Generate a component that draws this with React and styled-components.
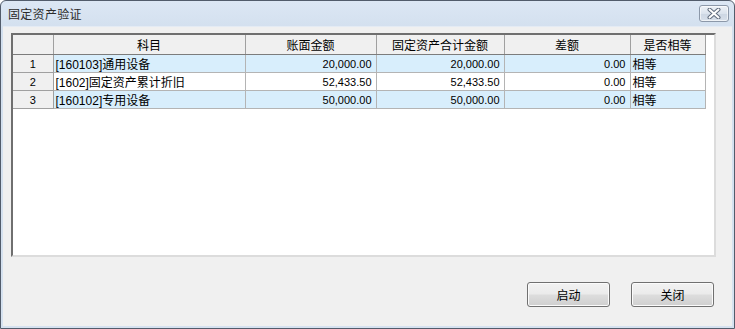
import React from "react";
import styled, { createGlobalStyle } from "styled-components";

const GlobalStyle = createGlobalStyle`
  html, body {
    margin: 0;
    padding: 0;
    background: #ffffff;
  }
  body {
    font-family: "Liberation Sans", "Noto Sans CJK SC", sans-serif;
    font-size: 12px;
    color: #000;
  }
`;

const Window = styled.div`
  width: 735px;
  height: 329px;
  box-sizing: border-box;
  border: 1px solid #525c6b;
  border-radius: 6px 6px 0 0;
  background: linear-gradient(#dce7f4, #d2dfee 30px, #d6e2f0);
  padding: 0 2px 2px 2px;
  display: flex;
  flex-direction: column;
`;

const TitleBar = styled.div`
  height: 25px;
  flex: none;
  display: flex;
  align-items: center;
  justify-content: space-between;
  padding: 0 3px 0 5px;
`;

const Title = styled.span`
  font-size: 12px;
  color: #2b2b2b;
  letter-spacing: 0.3px;
`;

const CloseButton = styled.div`
  width: 28px;
  height: 15px;
  margin-top: -1px;
  border: 1px solid #8c98a9;
  border-radius: 3px;
  background: linear-gradient(#eef2f7, #dbe3ed 50%, #ccd6e3 51%, #d8e0ea);
  display: flex;
  align-items: center;
  justify-content: center;
  box-shadow: inset 0 0 0 1px rgba(255, 255, 255, 0.6);
`;

const Body = styled.div`
  flex: 1;
  background: #f0f0f0;
  border-top: 1px solid #e4ebf4;
  display: flex;
  flex-direction: column;
  padding: 6px 16px 19px 8px;
`;

const Grid = styled.div`
  height: 224px;
  box-sizing: border-box;
  background: #ffffff;
  border-top: 2px solid #6f6f6f;
  border-left: 2px solid #6f6f6f;
  border-right: 2px solid #dcdcdc;
  border-bottom: 2px solid #dcdcdc;
  overflow: hidden;
`;

const Table = styled.table`
  border-collapse: collapse;
  table-layout: fixed;
  width: 692px;
`;

const HeadCell = styled.th`
  height: 19px;
  padding: 0;
  background: #f0f0f0;
  font-weight: normal;
  font-size: 12px;
  text-align: center;
  border-right: 1px solid #a0a0a0;
  border-bottom: 1px solid #7c7c7c;
  white-space: nowrap;
`;

const Row = styled.tr`
  height: 18px;
  background: ${(p) => (p.$alt ? "#d8eefc" : "#ffffff")};
`;

const NumCell = styled.td`
  background: #f0f0f0;
  text-align: center;
  padding: 0;
  font-size: 11px;
  border-right: 1px solid #a0a0a0;
  border-bottom: 1px solid #a0a0a0;
`;

const Cell = styled.td`
  padding: 0 ${(p) => (p.$right ? "4px" : "2px")};
  text-align: ${(p) => (p.$right ? "right" : "left")};
  font-size: ${(p) => (p.$right ? "11px" : "12px")};
  white-space: nowrap;
  overflow: hidden;
  border-right: 1px solid #b4b4b4;
  border-bottom: 1px solid #b4b4b4;
`;

const Footer = styled.div`
  margin-top: auto;
  display: flex;
  justify-content: flex-end;
  gap: 21px;
  padding-right: 2px;
`;

const Button = styled.button`
  width: 83px;
  height: 25px;
  border: 1px solid #707070;
  border-radius: 3px;
  background: linear-gradient(#f2f2f2, #ebebeb 48%, #dddddd 52%, #cfcfcf);
  box-shadow: inset 0 0 0 1px #fbfbfb;
  font-family: "Liberation Sans", "Noto Sans CJK SC", sans-serif;
  font-size: 12px;
  color: #000;
  padding: 0;
`;

const columns = [
  { key: "no", title: "", width: 40 },
  { key: "subject", title: "科目", width: 192 },
  { key: "book", title: "账面金额", width: 131 },
  { key: "asset", title: "固定资产合计金额", width: 128 },
  { key: "diff", title: "差额", width: 126 },
  { key: "equal", title: "是否相等", width: 75 },
];

const rows = [
  { subject: "[160103]通用设备", book: "20,000.00", asset: "20,000.00", diff: "0.00", equal: "相等" },
  { subject: "[1602]固定资产累计折旧", book: "52,433.50", asset: "52,433.50", diff: "0.00", equal: "相等" },
  { subject: "[160102]专用设备", book: "50,000.00", asset: "50,000.00", diff: "0.00", equal: "相等" },
];

const CloseIcon = () => (
  <svg width="14" height="11" viewBox="0 0 14 11">
    <path d="M2.5 1.5 L11.5 9.5 M11.5 1.5 L2.5 9.5" stroke="#5f6b7c" strokeWidth="4" strokeLinecap="round" />
    <path d="M2.5 1.5 L11.5 9.5 M11.5 1.5 L2.5 9.5" stroke="#ffffff" strokeWidth="2" strokeLinecap="round" />
  </svg>
);

export default function App() {
  return (
    <>
      <GlobalStyle />
      <Window>
        <TitleBar>
          <Title>固定资产验证</Title>
          <CloseButton>
            <CloseIcon />
          </CloseButton>
        </TitleBar>
        <Body>
          <Grid>
            <Table>
              <colgroup>
                {columns.map((c) => (
                  <col key={c.key} style={{ width: c.width }} />
                ))}
              </colgroup>
              <thead>
                <tr>
                  {columns.map((c) => (
                    <HeadCell key={c.key}>{c.title}</HeadCell>
                  ))}
                </tr>
              </thead>
              <tbody>
                {rows.map((r, i) => (
                  <Row key={i} $alt={i % 2 === 0}>
                    <NumCell>{i + 1}</NumCell>
                    <Cell>{r.subject}</Cell>
                    <Cell $right>{r.book}</Cell>
                    <Cell $right>{r.asset}</Cell>
                    <Cell $right>{r.diff}</Cell>
                    <Cell>{r.equal}</Cell>
                  </Row>
                ))}
              </tbody>
            </Table>
          </Grid>
          <Footer>
            <Button>启动</Button>
            <Button>关闭</Button>
          </Footer>
        </Body>
      </Window>
    </>
  );
}
